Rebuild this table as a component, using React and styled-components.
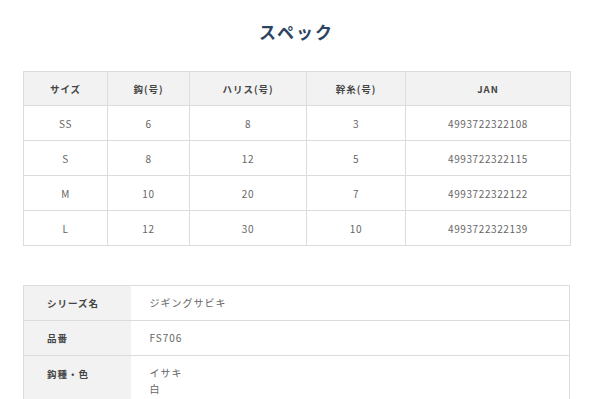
import React from "react";
import styled, { createGlobalStyle } from "styled-components";

const Global = createGlobalStyle`
  html, body { margin: 0; padding: 0; background: #fff; }
  body { font-family: "Noto Sans CJK JP", "Noto Sans", sans-serif; }
`;

const Page = styled.div`
  padding: 0 30px 0 23px;
`;

const Title = styled.h2`
  margin: 0;
  padding-top: 20px;
  height: 71px;
  box-sizing: border-box;
  text-align: center;
  font-size: 17px;
  font-weight: 700;
  letter-spacing: 2px;
  color: #2c4461;
  line-height: 24px;
`;

const Table = styled.table`
  width: 547px;
  border-collapse: collapse;
  table-layout: fixed;
  font-size: 10px;
  color: #666;
  letter-spacing: 0.6px;
`;

const Th = styled.th`
  background: #f2f2f2;
  border: 1px solid #dcdcdc;
  height: 33px;
  padding: 0;
  font-weight: 700;
  color: #444;
  font-size: 9.5px;
  letter-spacing: 1px;
  text-align: center;
`;

const Td = styled.td`
  border: 1px solid #dcdcdc;
  height: 34px;
  padding: 0;
  text-align: center;
`;

const DetailTable = styled(Table)`
  margin-top: 39px;
`;

const Label = styled.th`
  background: #f2f2f2;
  border: 1px solid #dcdcdc;
  border-right: none;
  height: 34px;
  padding: 0 0 0 23px;
  text-align: left;
  vertical-align: ${(p) => (p.$top ? "top" : "middle")};
  padding-top: ${(p) => (p.$top ? "10px" : "0")};
  font-weight: 700;
  color: #444;
  font-size: 9.5px;
  letter-spacing: 1px;
  line-height: 16px;
`;

const Value = styled.td`
  border: 1px solid #dcdcdc;
  border-left: none;
  height: 34px;
  padding: 0 0 0 19px;
  text-align: left;
  vertical-align: ${(p) => (p.$top ? "top" : "middle")};
  padding-top: ${(p) => (p.$top ? "9px" : "0")};
  letter-spacing: 1px;
  line-height: 16px;
`;

const cols = [84, 82, 117, 99, 165];
const rows = [
  ["SS", "6", "8", "3", "4993722322108"],
  ["S", "8", "12", "5", "4993722322115"],
  ["M", "10", "20", "7", "4993722322122"],
  ["L", "12", "30", "10", "4993722322139"],
];

export default function App() {
  return (
    <Page>
      <Global />
      <Title>スペック</Title>
      <Table>
        <colgroup>
          {cols.map((w, i) => (
            <col key={i} style={{ width: w }} />
          ))}
        </colgroup>
        <thead>
          <tr>
            <Th>サイズ</Th>
            <Th>鈎(号)</Th>
            <Th>ハリス(号)</Th>
            <Th>幹糸(号)</Th>
            <Th>JAN</Th>
          </tr>
        </thead>
        <tbody>
          {rows.map((r) => (
            <tr key={r[0]}>
              {r.map((c, i) => (
                <Td key={i}>{c}</Td>
              ))}
            </tr>
          ))}
        </tbody>
      </Table>
      <DetailTable>
        <colgroup>
          <col style={{ width: 107 }} />
          <col />
        </colgroup>
        <tbody>
          <tr>
            <Label>シリーズ名</Label>
            <Value>ジギングサビキ</Value>
          </tr>
          <tr>
            <Label>品番</Label>
            <Value>FS706</Value>
          </tr>
          <tr>
            <Label $top>鈎種・色</Label>
            <Value $top>
              イサキ
              <br />白
            </Value>
          </tr>
        </tbody>
      </DetailTable>
    </Page>
  );
}
